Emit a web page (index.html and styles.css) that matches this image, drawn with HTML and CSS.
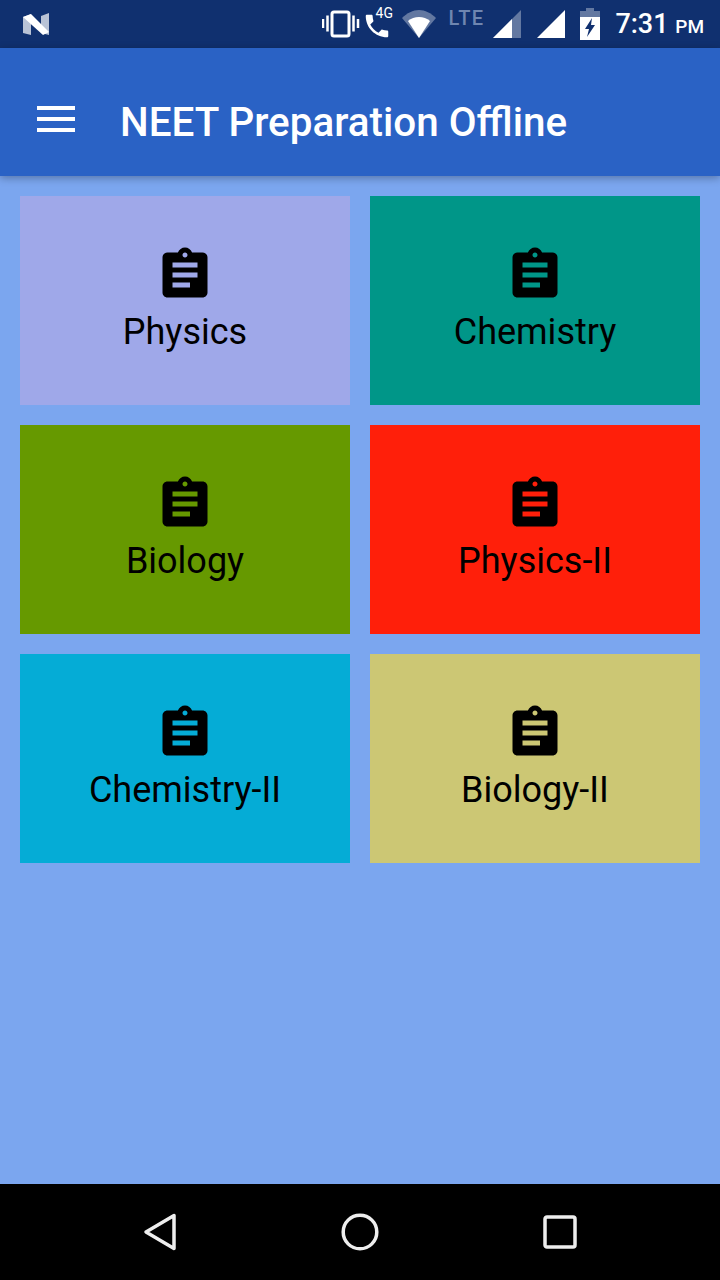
FILE: index.html
```html
<!DOCTYPE html>
<html>
<head>
    <title>NEET Preparation Offline</title>
    <link rel="stylesheet" href="styles.css">
</head>
<body>
    <svg class="defs" width="0" height="0">
        <symbol id="assignment" viewBox="0 0 24 24">
            <path d="M19 3h-4.18C14.4 1.84 13.3 1 12 1c-1.3 0-2.4.84-2.82 2H5c-1.1 0-2 .9-2 2v14c0 1.1.9 2 2 2h14c1.1 0 2-.9 2-2V5c0-1.1-.9-2-2-2zm-7 0c.55 0 1 .45 1 1s-.45 1-1 1-1-.45-1-1 .45-1 1-1zm2 14H7v-2h7v2zm3-4H7v-2h10v2zm0-4H7V7h10v2z"/>
        </symbol>
    </svg>

    <div class="screen">
        <div class="statusbar">
            <svg class="nlogo" width="30" height="26" viewBox="0 0 30 26">
                <path d="M2 6l8-3v21l-8-2z" fill="#b9c3d6"/>
                <path d="M28 2l-8 3v17l8 2z" fill="#b9c3d6"/>
                <path d="M2 6l8-3 18 18-6 3z" fill="#fff"/>
            </svg>
            <div class="status-right">
                <svg class="s-vibrate" width="38" height="30" viewBox="0 0 38 30">
                    <rect x="10" y="3" width="17" height="24" rx="2" fill="none" stroke="#fff" stroke-width="3"/>
                    <path d="M1 10v9M5.500 6.500v16M31.500 6.500v16M36 10v9" stroke="#fff" stroke-width="2.500"/>
                </svg>
                <div class="call">
                    <svg width="30" height="30" viewBox="0 0 24 24">
                        <path d="M6.600 10.800c1.400 2.800 3.800 5.100 6.600 6.600l2.200-2.200c.3-.3.700-.4 1-.2 1.100.4 2.300.6 3.600.6.600 0 1 .4 1 1V20c0 .600-.400 1-1 1C10.600 21 3 13.400 3 4c0-.600.400-1 1-1h3.500c.600 0 1 .400 1 1 0 1.300.200 2.500.600 3.600.100.300 0 .700-.200 1z" fill="#fff"/>
                    </svg>
                    <span class="call-label">4G</span>
                </div>
                <svg class="s-wifi" width="36" height="30" viewBox="0 0 36 30">
                    <path d="M1 9C6 4 12 1 18 1s12 3 17 8L18 29z" fill="#fff" fill-opacity=".35"/>
                    <path d="M7 12c3-2.500 7-4 11-4s8 1.500 11 4L18 29z" fill="#fff"/>
                </svg>
                <span class="lte">LTE</span>
                <svg class="s-signal" width="30" height="30" viewBox="0 0 30 30">
                    <path d="M1 29L29 1v28z" fill="#fff" fill-opacity=".35"/>
                    <path d="M1 29l19-19v19z" fill="#fff"/>
                </svg>
                <svg class="s-signal2" width="30" height="30" viewBox="0 0 30 30">
                    <path d="M1 29L29 1v28z" fill="#fff"/>
                </svg>
                <svg class="s-battery" width="20" height="32" viewBox="0 0 20 32">
                    <path d="M6 0h8v3h6v29H0V3h6z" fill="#fff" fill-opacity=".35"/>
                    <path d="M0 9h20v23H0z" fill="#fff"/>
                    <path d="M12 10L5 21h4l-2 8 8-12h-4z" fill="#10306f"/>
                </svg>
                <span class="clock">7:31 <small>PM</small></span>
            </div>
        </div>

        <header class="appbar">
            <div class="menu-icon"><span></span><span></span><span></span></div>
            <h1>NEET Preparation Offline</h1>
        </header>

        <main class="content">
            <div class="grid">
                <a class="tile tile-physics">
                    <svg class="tile-icon"><use href="#assignment"/></svg>
                    <span>Physics</span>
                </a>
                <a class="tile tile-chemistry">
                    <svg class="tile-icon"><use href="#assignment"/></svg>
                    <span>Chemistry</span>
                </a>
                <a class="tile tile-biology">
                    <svg class="tile-icon"><use href="#assignment"/></svg>
                    <span>Biology</span>
                </a>
                <a class="tile tile-physics2">
                    <svg class="tile-icon"><use href="#assignment"/></svg>
                    <span>Physics-II</span>
                </a>
                <a class="tile tile-chemistry2">
                    <svg class="tile-icon"><use href="#assignment"/></svg>
                    <span>Chemistry-II</span>
                </a>
                <a class="tile tile-biology2">
                    <svg class="tile-icon"><use href="#assignment"/></svg>
                    <span>Biology-II</span>
                </a>
            </div>
        </main>

        <nav class="navbar">
            <svg width="36" height="40" viewBox="0 0 36 40">
                <path d="M31 3.500v33L3 20z" fill="none" stroke="#eee" stroke-width="3.500" stroke-linejoin="round"/>
            </svg>
            <svg width="38" height="38" viewBox="0 0 38 38">
                <circle cx="19" cy="19" r="16.800" fill="none" stroke="#eee" stroke-width="3.500"/>
            </svg>
            <svg width="34" height="34" viewBox="0 0 34 34">
                <rect x="2" y="2" width="30" height="30" rx="2" fill="none" stroke="#eee" stroke-width="3.500"/>
            </svg>
        </nav>
    </div>
</body>
</html>
```

FILE: styles.css
```css
html, body {
    margin: 0;
    padding: 0;
}
body {
    font-family: Roboto, "Liberation Sans", sans-serif;
    background: #7ba6ef;
}
.defs {
    position: absolute;
}
.screen {
    width: 720px;
    height: 1280px;
    display: flex;
    flex-direction: column;
    overflow: hidden;
}

/* status bar */
.statusbar {
    height: 48px;
    background: #10306f;
    display: flex;
    align-items: center;
    justify-content: space-between;
    padding: 0 16px 0 21px;
    color: #fff;
    flex: none;
}
.nlogo {
    display: block;
}
.status-right {
    display: flex;
    align-items: center;
}
.call {
    position: relative;
    margin: 4px 0 0 2px;
    height: 30px;
}
.call-label {
    position: absolute;
    left: 14px;
    top: -6px;
    font-size: 14px;
}
.s-wifi {
    margin-left: 9px;
}
.lte {
    font-size: 20px;
    font-weight: 500;
    letter-spacing: 1.300px;
    color: #6f86b0;
    margin: -12px 0 0 12px;
}
.s-signal {
    margin-left: 8px;
}
.s-signal2 {
    margin-left: 14px;
}
.s-battery {
    margin-left: 14px;
}
.clock {
    font-size: 27px;
    font-weight: 500;
    margin-left: 15px;
}
.clock small {
    font-size: 19px;
}

/* toolbar */
.appbar {
    height: 128px;
    box-sizing: border-box;
    padding-top: 14px;
    background: #2a62c5;
    display: flex;
    align-items: center;
    box-shadow: 0 2px 8px rgba(0,0,0,0.3);
    position: relative;
    flex: none;
}
.menu-icon {
    width: 38px;
    margin-left: 37px;
    display: flex;
    flex-direction: column;
    gap: 7px;
}
.menu-icon span {
    height: 4px;
    background: #fff;
}
.appbar h1 {
    margin: 6px 0 0 45px;
    font-size: 40.400px;
    font-weight: 500;
    color: #fff;
}

/* subject tiles */
.content {
    flex: 1;
    padding: 20px;
}
.grid {
    display: grid;
    grid-template-columns: 330px 330px;
    grid-auto-rows: 209px;
    gap: 20px;
}
.tile {
    display: flex;
    flex-direction: column;
    align-items: center;
    padding-top: 49px;
    box-sizing: border-box;
    color: #000;
    font-size: 36px;
    line-height: 40px;
}
.tile-icon {
    width: 60px;
    height: 60px;
    margin-bottom: 7px;
}
.tile-physics { background: #9fa8e9; }
.tile-chemistry { background: #009688; }
.tile-biology { background: #669900; }
.tile-physics2 { background: #ff1f0a; }
.tile-chemistry2 { background: #05acd6; }
.tile-biology2 { background: #ccc774; }

/* nav bar */
.navbar {
    height: 96px;
    background: #000;
    display: flex;
    align-items: center;
    flex: none;
    position: relative;
}
.navbar svg {
    position: absolute;
}
.navbar svg:nth-child(1) { left: 143px; top: 28px; }
.navbar svg:nth-child(2) { left: 341px; top: 29px; }
.navbar svg:nth-child(3) { left: 543px; top: 31px; }
```
